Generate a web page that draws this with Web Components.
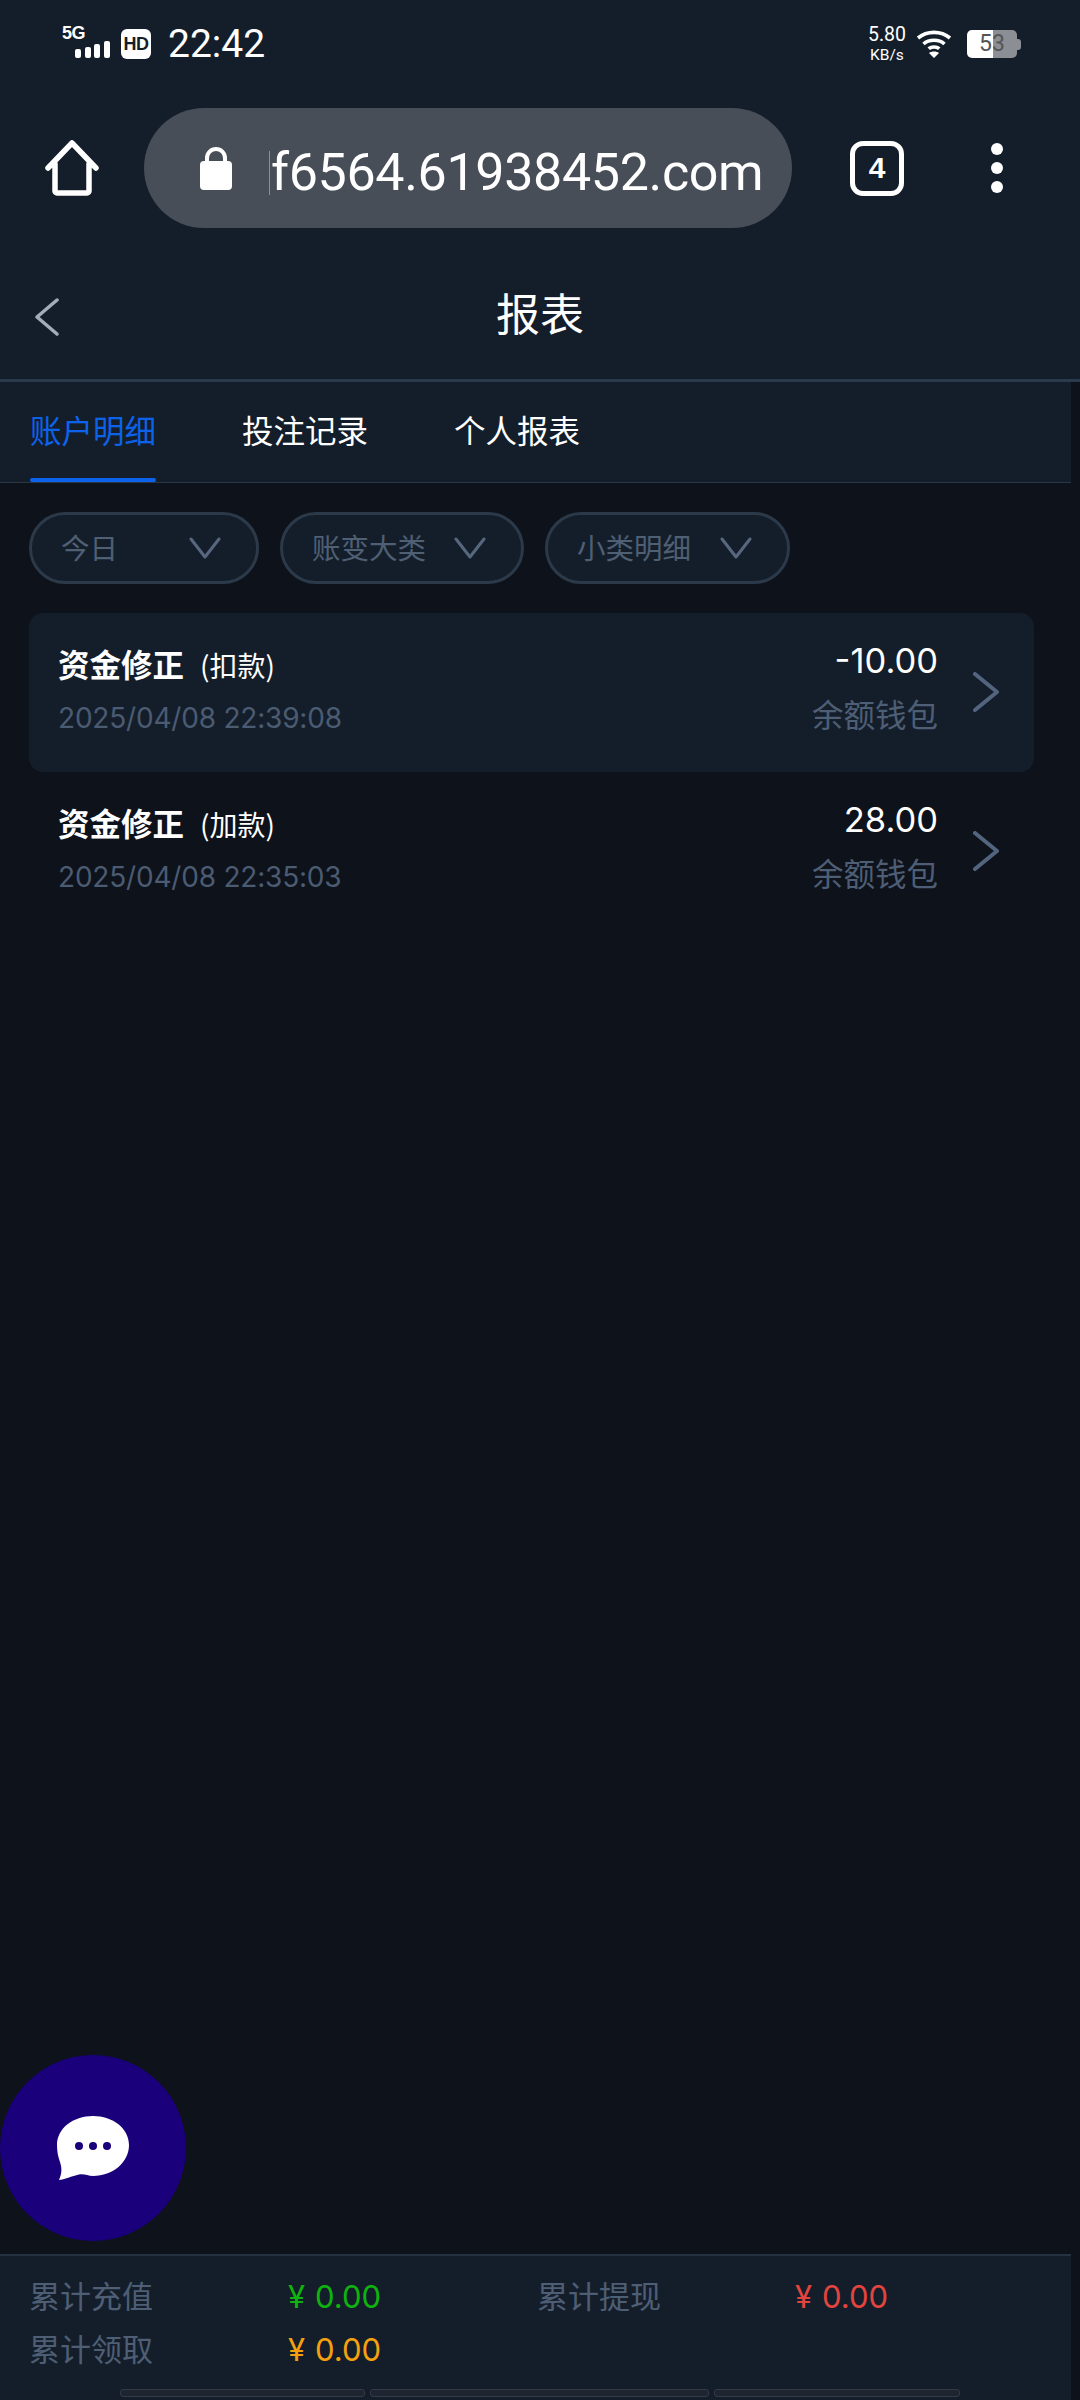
<!DOCTYPE html>
<html lang="zh">
<head>
<meta charset="utf-8">
<title>报表</title>
<style>
  html, body { margin: 0; padding: 0; background: #0d121b; }
  body { font-family: "Noto Sans CJK SC", "Noto Sans", sans-serif; color: #fff; }
</style>
</head>
<body>
<report-app></report-app>

<script>
(function () {
  const CJK = `"Noto Sans CJK SC", sans-serif`;
  const LATIN = `Inter, "Noto Sans CJK SC", sans-serif`;

  const chevron = (dir, w, h, color, sw) => {
    const paths = {
      left: `M${w - 2} 2 L2 ${h / 2} L${w - 2} ${h - 2}`,
      right: `M2 2 L${w - 2} ${h / 2} L2 ${h - 2}`,
      down: `M2 2 L${w / 2} ${h - 2} L${w - 2} 2`
    };
    return `<svg width="${w}" height="${h}" viewBox="0 0 ${w} ${h}" aria-hidden="true">
      <path d="${paths[dir]}" fill="none" stroke="${color}" stroke-width="${sw}" stroke-linecap="round" stroke-linejoin="round"/>
    </svg>`;
  };

  class StatusBar extends HTMLElement {
    connectedCallback() {
      this.attachShadow({mode: 'open'}).innerHTML = `
        <style>
          :host { display:flex; justify-content:space-between; align-items:center; height:88px; padding:0 59px 0 62px; box-sizing:border-box; background:#141e2a; font-family:${LATIN}; color:#fff; }
          .side { display:flex; align-items:center; }
          .sig { display:block; width:48px; height:32px; margin-top:-4px; }
          .sig b { display:block; font:700 18px/15px "Liberation Sans", sans-serif; letter-spacing:-.5px; }
          .bars { display:flex; align-items:flex-end; gap:3.600px; margin:0 0 0 13px; height:17px; }
          .bars i { display:block; width:6px; background:#fff; border-radius:2px; }
          .hd { width:30px; height:30px; margin-left:11px; background:#fff; border-radius:6px; display:flex; align-items:center; justify-content:center; color:#141e2a; font:700 18px/1 "Liberation Sans", sans-serif; letter-spacing:-.5px; }
          .time { font:400 39px/1 Roboto, sans-serif; margin-left:17px; }
          .speed { display:flex; flex-direction:column; align-items:center; font:400 19.500px/23px Roboto, sans-serif; margin-top:-1px; }
          .speed small { font-size:15.500px; line-height:18px; }
          .wifi { margin-left:10px; }
          .batt { position:relative; width:50px; height:28px; margin-left:15px; border-radius:5px; overflow:hidden; background:linear-gradient(90deg,#fff 0 53%,#8b8e95 53%); color:#555; font:400 23px/28px Roboto, sans-serif; text-align:center; }
          .nub { width:4px; height:11px; background:#8b8e95; border-radius:0 3px 3px 0; }
        </style>
        <div class="side">
          <div class="sig"><b>5G</b><div class="bars"><i style="height:9px"></i><i style="height:11px"></i><i style="height:14px"></i><i style="height:17px"></i></div></div>
          <div class="hd">HD</div>
          <div class="time">22:42</div>
        </div>
        <div class="side">
          <div class="speed"><span>5.80</span><small>KB/s</small></div>
          <svg class="wifi" width="36" height="30" viewBox="0 0 36 30" aria-hidden="true">
            <g fill="none" stroke="#fff" stroke-width="3.6">
              <path d="M2 9 C11 1.500 25 1.500 34 9"/>
              <path d="M7.500 15 C13 10 23 10 28.500 15"/>
            </g>
            <path d="M11.500 18.500 C15 15.500 21 15.500 24.500 18.500 L22 21 C19.500 19.300 16.500 19.300 14 21 Z M13 24 C15.500 22 20.500 22 23 24 L18 29 Z" fill="#fff"/>
          </svg>
          <div class="batt">53</div><div class="nub"></div>
        </div>`;
    }
  }

  class BrowserBar extends HTMLElement {
    connectedCallback() {
      this.attachShadow({mode: 'open'}).innerHTML = `
        <style>
          :host { display:flex; align-items:center; height:164px; padding:0 0 4px 45px; box-sizing:border-box; background:#141e2a; color:#fff; }
          .home { flex:none; width:54px; height:56px; display:block; }
          .pill { flex:none; margin-left:45px; width:648px; height:120px; box-sizing:border-box; border-radius:60px; background:#484e58; display:flex; align-items:center; padding-left:56px; overflow:hidden; }
          .lock { flex:none; display:block; }
          .url { position:relative; margin:9px 0 0 37px; font:400 52px/60px Roboto, sans-serif; white-space:nowrap; padding-left:2px; letter-spacing:-.35px; }
          .url::before { content:""; position:absolute; left:0; top:8px; bottom:8px; width:1px; background:#8b9097; }
          .tabs { flex:none; margin-left:58px; width:54px; height:55px; box-sizing:border-box; border:5px solid #fff; border-radius:13px; display:flex; align-items:center; justify-content:center; font:700 30px/1 "Liberation Sans", sans-serif; }
          .more { flex:none; margin-left:87px; display:flex; flex-direction:column; gap:7px; }
          .more i { display:block; width:12px; height:12px; border-radius:50%; background:#fff; }
        </style>
        <svg class="home" viewBox="0 0 54 56" aria-hidden="true">
          <path d="M3 28 L27 3 L51 28 M10 24 V51 a2 2 0 0 0 2 2 H42 a2 2 0 0 0 2 -2 V24" fill="none" stroke="#fff" stroke-width="5.500" stroke-linecap="round" stroke-linejoin="round"/>
        </svg>
        <div class="pill">
          <svg class="lock" width="32" height="43" viewBox="0 0 32 43" aria-hidden="true">
            <path d="M7 16 V11 a9 9 0 0 1 18 0 V16" fill="none" stroke="#fff" stroke-width="4"/>
            <rect x="0" y="14" width="32" height="29" rx="4" fill="#fff"/>
          </svg>
          <span class="url">f6564.61938452.com</span>
        </div>
        <div class="tabs">4</div>
        <div class="more"><i></i><i></i><i></i></div>`;
    }
  }

  class PageHeader extends HTMLElement {
    connectedCallback() {
      this.attachShadow({mode: 'open'}).innerHTML = `
        <style>
          :host { display:flex; align-items:center; justify-content:center; position:relative; height:130px; box-sizing:border-box; background:#141e2a; border-bottom:3px solid #2a3a4c; font:400 44px/1 ${CJK}; color:#fff; }
          .back { position:absolute; left:35px; top:43px; display:block; }
          .t { margin-top:-8px; }
        </style>
        <span class="back">${chevron('left', 24, 38, '#a3adb9', 3.5)}</span>
        <span class="t"><slot></slot></span>`;
    }
  }

  class TabStrip extends HTMLElement {
    connectedCallback() {
      this.attachShadow({mode: 'open'}).innerHTML = `
        <style>
          :host { display:flex; width:1071px; gap:86px; height:101px; box-sizing:border-box; padding-left:30px; background:#141e2a; border-bottom:1px solid #2a3645; }
        </style>
        <slot></slot>`;
    }
  }

  class TabItem extends HTMLElement {
    connectedCallback() {
      this.attachShadow({mode: 'open'}).innerHTML = `
        <style>
          :host { display:block; height:100px; box-sizing:border-box; padding-top:25px; font:400 31.500px/44px ${CJK}; color:#fff; position:relative; }
          :host([active]) { color:#0d62ea; }
          :host([active])::after { content:""; position:absolute; left:0; right:0; bottom:0; height:4px; border-radius:2px; background:#0d62ea; }
        </style>
        <slot></slot>`;
    }
  }

  class FilterPill extends HTMLElement {
    connectedCallback() {
      const w = this.getAttribute('w');
      this.attachShadow({mode: 'open'}).innerHTML = `
        <style>
          :host { display:flex; align-items:center; justify-content:space-between; width:${w}px; height:72px; box-sizing:border-box; padding:0 35px 0 29px; border:3px solid #2b3949; border-radius:36px; background:#141e2a; font:400 28.500px/1 ${CJK}; color:#4f5f74; }
          span { margin-top:-2px; }
        </style>
        <span><slot></slot></span>${chevron('down', 32, 22, '#56677e', 3)}`;
    }
  }

  class FilterRow extends HTMLElement {
    connectedCallback() {
      this.attachShadow({mode: 'open'}).innerHTML = `
        <style>:host { display:flex; gap:21px; padding:29px 0 29px 29px; }</style>
        <slot></slot>`;
    }
  }

  class RecordRow extends HTMLElement {
    connectedCallback() {
      this.attachShadow({mode: 'open'}).innerHTML = `
        <style>
          :host { display:flex; width:1005px; height:159px; margin-left:29px; box-sizing:border-box; padding:28px 35px 0 29px; border-radius:14px; justify-content:space-between; }
          :host([active]) { background:#141e2a; }
          .main { flex:1; }
          .title { display:flex; align-items:baseline; color:#fff; height:44px; font:700 31.500px/44px ${CJK}; }
          .title small { font:400 28px/44px ${CJK}; margin-left:16px; }
          .time { margin-top:14px; font:400 28px/38px Inter, sans-serif; color:#4b5b72; letter-spacing:-.2px; }
          .right { text-align:right; }
          .amt { color:#fff; height:44px; font:400 34.500px/40px Inter, sans-serif; }
          .wallet { margin-top:8px; font:400 31.500px/40px ${CJK}; color:#4e5e75; }
          .go { margin:31px 0 0 35px; display:block; }
        </style>
        <div class="main">
          <div class="title"><span>${this.getAttribute('name')}</span><small>${this.getAttribute('kind')}</small></div>
          <div class="time">${this.getAttribute('time')}</div>
        </div>
        <div class="right">
          <div class="amt">${this.getAttribute('amount')}</div>
          <div class="wallet">${this.getAttribute('wallet')}</div>
        </div>
        <span class="go">${chevron('right', 26, 40, '#52647e', 4)}</span>`;
    }
  }

  class ChatButton extends HTMLElement {
    connectedCallback() {
      this.attachShadow({mode: 'open'}).innerHTML = `
        <style>
          :host { position:absolute; left:0; top:2055px; width:186px; height:186px; border-radius:50%; background:#1a007a; display:flex; align-items:center; justify-content:center; }
          svg { display:block; margin-top:-1px; margin-left:-1px; }
        </style>
        <svg width="72" height="64" viewBox="0 0 72 64" aria-hidden="true">
          <path d="M36 0 C56 0 72 12.500 72 29 C72 46 56 60 36 60 C31 60 27 57.500 22 58.500 C15 60 7 63.500 2 64 C3.500 60 6 55 3 46 C1 41 0 35 0 29 C0 12.500 16 0 36 0 Z" fill="#fff"/>
          <circle cx="22" cy="30" r="4" fill="#1a007a"/><circle cx="36" cy="30" r="4" fill="#1a007a"/><circle cx="50" cy="30" r="4" fill="#1a007a"/>
        </svg>`;
    }
  }

  class SummaryBar extends HTMLElement {
    connectedCallback() {
      this.attachShadow({mode: 'open'}).innerHTML = `
        <style>
          :host { display:block; width:1071px; height:146px; box-sizing:border-box; background:#141e2a; border-top:2px solid #253242; padding:12px 0 0 29px; position:relative; }
          .grid { display:grid; grid-template-columns:259px 249px 258px 1fr; grid-auto-rows:53px; align-items:center; }
          .pad { display:flex; gap:5px; position:absolute; bottom:3px; left:120px; }
          .pad i { display:block; height:8px; box-sizing:border-box; border:1px solid #333a45; border-radius:3px; background:#1c2530; }
        </style>
        <div class="grid"><slot></slot></div>
        <div class="pad"><i style="width:245px"></i><i style="width:339px"></i><i style="width:246px"></i></div>`;
    }
  }

  class SummaryLabel extends HTMLElement {
    connectedCallback() {
      this.attachShadow({mode: 'open'}).innerHTML = `
        <style>:host { display:block; font:400 31px/53px ${CJK}; color:#4e5e75; }</style><slot></slot>`;
    }
  }

  class SummaryValue extends HTMLElement {
    connectedCallback() {
      this.attachShadow({mode: 'open'}).innerHTML = `
        <style>
          :host { display:flex; margin-top:5px; font:400 31px/48px Inter, ${CJK}; color:${this.getAttribute('color')}; }
          span { width:27px; }
        </style>
        <span>¥</span><slot></slot>`;
    }
  }

  class ReportApp extends HTMLElement {
    connectedCallback() {
      this.attachShadow({mode: 'open'}).innerHTML = `
        <style>
          :host { display:flex; flex-direction:column; position:relative; width:1080px; height:2400px; overflow:hidden; background:#0d121b; }
          .list { display:block; }
          .grow { flex:1; }
        </style>
        <status-bar></status-bar>
        <browser-bar></browser-bar>
        <page-header>报表</page-header>
        <tab-strip>
          <tab-item active>账户明细</tab-item>
          <tab-item>投注记录</tab-item>
          <tab-item>个人报表</tab-item>
        </tab-strip>
        <filter-row>
          <filter-pill w="230">今日</filter-pill>
          <filter-pill w="244">账变大类</filter-pill>
          <filter-pill w="245">小类明细</filter-pill>
        </filter-row>
        <div class="list">
          <record-row active name="资金修正" kind="(扣款)" time="2025/04/08 22:39:08" amount="-10.00" wallet="余额钱包"></record-row>
          <record-row name="资金修正" kind="(加款)" time="2025/04/08 22:35:03" amount="28.00" wallet="余额钱包"></record-row>
        </div>
        <div class="grow"></div>
        <chat-button></chat-button>
        <summary-bar>
          <summary-label>累计充值</summary-label><summary-value color="#0fb30f">0.00</summary-value>
          <summary-label>累计提现</summary-label><summary-value color="#e2453f">0.00</summary-value>
          <summary-label>累计领取</summary-label><summary-value color="#f5a10f">0.00</summary-value>
        </summary-bar>`;
    }
  }

  customElements.define('status-bar', StatusBar);
  customElements.define('browser-bar', BrowserBar);
  customElements.define('page-header', PageHeader);
  customElements.define('tab-strip', TabStrip);
  customElements.define('tab-item', TabItem);
  customElements.define('filter-pill', FilterPill);
  customElements.define('filter-row', FilterRow);
  customElements.define('record-row', RecordRow);
  customElements.define('chat-button', ChatButton);
  customElements.define('summary-bar', SummaryBar);
  customElements.define('summary-label', SummaryLabel);
  customElements.define('summary-value', SummaryValue);
  customElements.define('report-app', ReportApp);
})();
</script>
</body>
</html>
